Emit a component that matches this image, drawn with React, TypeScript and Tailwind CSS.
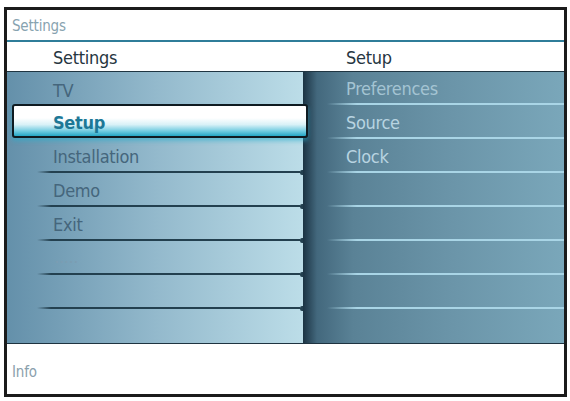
import React from "react";

const leftRows = [
  { label: "TV", kind: "normal" },
  { label: "Setup", kind: "selected" },
  { label: "Installation", kind: "normal" },
  { label: "Demo", kind: "normal" },
  { label: "Exit", kind: "normal" },
  { label: ".....", kind: "dots" },
  { label: "", kind: "normal" },
  { label: "", kind: "last" },
];

const rightRows = ["Preferences", "Source", "Clock", "", "", "", "", ""];

function LeftLine() {
  return (
    <div className="h-[2px] flex items-center ml-[30px]">
      <div className="h-[2px] flex-1 bg-[linear-gradient(to_right,rgba(35,64,79,0),#23404f_14px)]" />
      <div className="w-[3px] h-[5px] rounded-l-[2px] bg-[#23404f]" />
    </div>
  );
}

function RightLine() {
  return (
    <div className="h-[2px] ml-[24px] bg-[linear-gradient(to_right,rgba(168,212,228,0),#a9d5e6_30px)]" />
  );
}

export default function App() {
  return (
    <div className="w-[570px] h-[401px] bg-white pt-[7px] pl-[4px] font-['DejaVu_Sans_Condensed','DejaVu_Sans',sans-serif] font-stretch-condensed">
      <div className="w-[563px] h-[390px] border-[3px] border-[#1b1b1b] flex flex-col bg-white">
        {/* header */}
        <div className="h-[30px] flex items-center pl-[5px] pt-[2px] text-[15px] text-[#88a3b0] tracking-[-0.2px]">
          Settings
        </div>
        <div className="h-[2px] bg-[#2f7d99]" />
        {/* title row */}
        <div className="h-[30px] border-b border-[#1f3542] grid grid-cols-[296px_1fr] text-[18px] text-[#26363f] tracking-[-0.3px]">
          <div className="pl-[46px] flex items-center pt-[2px]">Settings</div>
          <div className="pl-[43px] flex items-center pt-[2px]">Setup</div>
        </div>
        {/* body */}
        <div className="h-[272px] border-b border-[#1e3340] flex text-[18px] tracking-[-0.3px]">
          <div className="w-[296px] shrink-0 flex flex-col bg-[linear-gradient(to_right,#6490aa,#93b9cc_50%,#bcdde8)]">
            {leftRows.map((r, i) => {
              const h = i === 0 ? "h-[33px]" : "h-[34px]";
              if (r.kind === "selected") {
                return (
                  <div key={i} className={`${h} flex`}>
                    <div className="relative z-10 shrink-0 -mt-[1px] ml-[5px] w-[296px] h-[34px] rounded-[3px] border-2 border-[#0f1b21] bg-[linear-gradient(to_bottom,#ffffff,#ffffff_40%,#d9f1f7_62%,#6fcbe0_84%,#24a6c4)] shadow-[0_3px_4px_rgba(40,175,205,0.55)] flex items-center pl-[39px] pt-[2px] font-semibold text-[#1d7896]">
                      {r.label}
                    </div>
                  </div>
                );
              }
              return (
                <div key={i} className={`${h} flex flex-col`}>
                  <div className="flex-1 flex items-center pl-[46px] pt-[3px] text-[#45667c]">
                    {r.kind === "dots" ? (
                      <span className="text-[11px] font-bold tracking-[1px] text-[#7b9db2] pl-[2px] pt-[4px]">.....</span>
                    ) : (
                      r.label
                    )}
                  </div>
                  {i >= 2 && r.kind !== "last" ? <LeftLine /> : null}
                </div>
              );
            })}
          </div>
          <div className="flex-1 flex flex-col bg-[linear-gradient(to_right,#1b3343,#43687d_14px,#5a8296_50px,#6b95a9_150px,#7aa7ba)]">
            {rightRows.map((label, i) => {
              const h = i === 0 ? "h-[33px]" : "h-[34px]";
              return (
                <div key={i} className={`${h} flex flex-col`}>
                  <div
                    className={`flex-1 flex items-center pl-[43px] pt-[2px] ${
                      i === 0 ? "text-[#a4c4d3]" : "text-[#b8d4e1]"
                    }`}
                  >
                    {label}
                  </div>
                  {i < 7 ? <RightLine /> : null}
                </div>
              );
            })}
          </div>
        </div>
        {/* info */}
        <div className="flex-1 flex items-center pl-[5px] pt-[6px] text-[15px] text-[#8aa0ac] tracking-[-0.2px]">
          Info
        </div>
      </div>
    </div>
  );
}
